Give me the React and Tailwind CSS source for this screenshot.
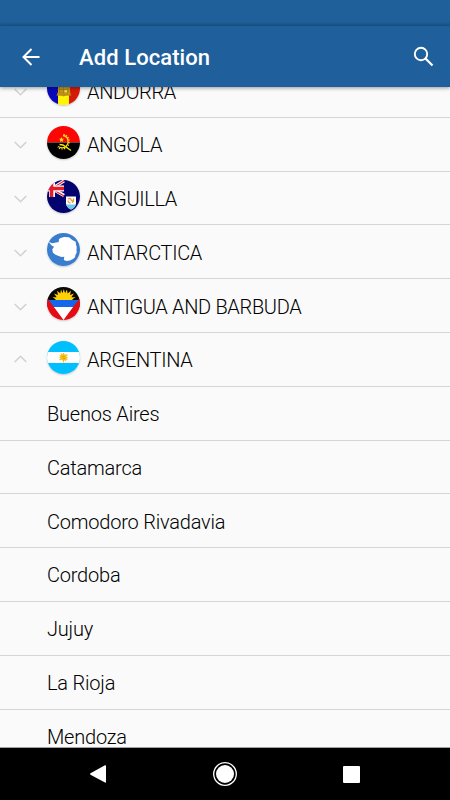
import { clsx } from 'clsx'

function AndorraFlag() {
  return (
    <>
      <path fill="#0b08b8" d="M0 0h11v33H0z" />
      <path fill="#fff500" d="M11 0h11v33H11z" />
      <path fill="#d51b08" d="M22 0h11v33H22z" />
      <path fill="#c79a1b" d="M11 10h12v10l1 3.500h-5l-2.500 1-2.500-1H9.500L11 20z" />
      <path fill="none" stroke="#9a741a" strokeWidth="0.600" d="M12.500 12h8.500v9h-8.500zM16.500 12v9M12.500 17.500h8.500M10 23h13.500" />
      <path fill="#f1d34a" d="M17.500 18h2.500v2.500h-2.500z" />
    </>
  )
}

function AngolaFlag() {
  return (
    <>
      <path fill="#fb0505" d="M0 0h33v16.500H0z" />
      <path fill="#000" d="M0 16.500h33V33H0z" />
      <path
        fill="none"
        stroke="#f7df13"
        strokeWidth="1.300"
        d="M16 9.500C21.500 10.500 22.500 16 19.500 19.800C17.500 22.300 14 22.200 11 20.500"
      />
      <path
        fill="none"
        stroke="#f7df13"
        strokeWidth="1.200"
        strokeDasharray="1.300 1.300"
        d="M16.500 8.300C22.500 9.500 23.500 16.500 20.500 20.700C18 23.500 14 23.700 10.500 21.500"
      />
      <path fill="none" stroke="#f7df13" strokeWidth="1.400" d="M12.500 18.500l3.500.500 8 5.500" />
      <path fill="#f7df13" d="M14.500 11l.7 1.700 1.900.1-1.400 1.300.5 1.900-1.700-1-1.600 1 .4-1.900-1.400-1.300 1.900-.1z" />
    </>
  )
}

function AnguillaFlag() {
  return (
    <>
      <path fill="#04046f" d="M0 0h33v33H0z" />
      <path stroke="#fff" strokeWidth="3.200" d="M5 8.500L17 1M5 8.500l12 7" />
      <path stroke="#e51b2b" strokeWidth="1.100" d="M5 8.500L17 1M5 9l12 7" />
      <path stroke="#fff" strokeWidth="6" d="M5 0v17M0 8.500h17" />
      <path stroke="#e51b2b" strokeWidth="3.600" d="M4.500 0v17M0 8.500h17" />
      <path fill="#fff" d="M19 16.500h10v7q-.6 4-5 6Q19.600 27.500 19 23.500z" />
      <path fill="#69cbe5" d="M19.200 24.500h9.600q-1 3.500-4.800 5q-3.800-1.500-4.800-5z" />
      <path fill="none" stroke="#f29a32" strokeWidth="1.200" d="M21 19q2.500-1.500 3 .5t2 1M21 20.500q0 2.500 2.500 2.300M25 22.500q2-1 1.500-4" />
    </>
  )
}

function AntarcticaFlag() {
  return (
    <>
      <path fill="#3a7dce" d="M0 0h33v33H0z" />
      <path
        fill="#fff"
        d="M1.700 8.700L5 10.300l3-.6 3.700-.7.2-2.500L13 5.300 17 4l5 .3L25.300 7l3.400 1.700.3 3 .7 2-.2 3 .2 3-1.200 2-.5 2.600-2 1.700-3 1.500-3.500.5-2.700-1 .5-3.300-2.700.2-3-.9-3-1.300-2.700-2-.6-3.400L7 13.700l-2.700-1.400z"
      />
    </>
  )
}

function AntiguaFlag() {
  return (
    <>
      <path fill="#080808" d="M0 0h33v13H0z" />
      <path
        fill="#ffd008"
        d="M6 13.500l3-1-3.500-2.300 4.200 0-2.700-3.700 4 1.500-1-4.300 3.300 2.900L14 2.600l1.500 3.700L16.800 2l1.300 4.300 1.800-3.700.7 4 3.400-2.900-1 4.300 4-1.500-2.700 3.700 4.200 0L25 12.500l3 1z"
      />
      <path fill="#1268ec" d="M0 13h33v7H0z" />
      <path fill="#fff" d="M0 20h33v13H0z" />
      <path fill="#e20c12" d="M0 12h1L16.500 33H0zM33 12h-1L16.500 33H33z" />
    </>
  )
}

function ArgentinaFlag() {
  return (
    <>
      <path fill="#00bfff" d="M0 0h33v33H0z" />
      <path fill="#fff" d="M0 11h33v11H0z" />
      <circle cx="16.500" cy="16.200" r="3.200" fill="#f8c51b" />
      <path
        stroke="#f4bd15"
        strokeWidth="1.100"
        d="M16.500 12v9.500M12.500 14.500l8 4M20.500 13.500l-8 5.500M12.500 16.500h8M14 12.500l5 7.500"
      />
      <path stroke="#b98716" strokeWidth="0.500" d="M15.500 15.500h2M16 17.500h2" />
    </>
  )
}

const countries = [
  { name: 'ANDORRA', Flag: AndorraFlag },
  { name: 'ANGOLA', Flag: AngolaFlag },
  { name: 'ANGUILLA', Flag: AnguillaFlag },
  { name: 'ANTARCTICA', Flag: AntarcticaFlag },
  { name: 'ANTIGUA AND BARBUDA', Flag: AntiguaFlag },
  {
    name: 'ARGENTINA',
    Flag: ArgentinaFlag,
    cities: ['Buenos Aires', 'Catamarca', 'Comodoro Rivadavia', 'Cordoba', 'Jujuy', 'La Rioja', 'Mendoza'],
  },
]

function CountryRow({ name, Flag, expanded }) {
  return (
    <div className="flex h-[53.8px] items-start border-b border-[#d5d5d5] pl-[14px]">
      <svg
        className={clsx('h-2 w-[13px] shrink-0', expanded ? 'mt-[22px]' : 'mt-[23.500px]')}
        viewBox="0 0 13 8"
        fill="none"
        stroke="#d2d2d2"
        strokeWidth="1.600"
      >
        <path d={expanded ? 'M.7 7L6.500 1.300 12.300 7' : 'M.7 1L6.500 6.700 12.300 1'} />
      </svg>
      <svg
        className="mt-[8px] ml-[20px] size-[33px] shrink-0 rounded-full shadow-[0_1px_2px_rgba(0,0,0,0.2)]"
        viewBox="0 0 33 33"
        fill="none"
      >
        <Flag />
      </svg>
      <span className="mt-[15.500px] ml-[7px] whitespace-nowrap text-[20px] leading-6 font-light tracking-[-0.33px]">
        {name}
      </span>
    </div>
  )
}

function CityRow({ name }) {
  return (
    <div className="flex h-[53.8px] items-start border-b border-[#d5d5d5] pl-[47px]">
      <span className="mt-[15.300px] text-[20px] leading-6 font-light tracking-[-0.21px]">{name}</span>
    </div>
  )
}

export default function App() {
  return (
    <div className="flex h-[800px] w-[450px] flex-col overflow-hidden bg-[#fafafa] font-['Roboto',sans-serif] text-black">
      <div className="h-[26px] shrink-0 bg-linear-to-b from-[#1f609b] from-85% to-[#1b5387]" />
      <header className="relative z-10 flex h-[61px] shrink-0 items-center bg-[#1f5f9b] pr-[16px] pl-[22px] text-white shadow-[0_1px_4px_rgba(0,0,0,0.4)]">
        <svg className="size-[18px]" viewBox="0 0 18 18" fill="none" stroke="currentColor" strokeWidth="2">
          <path d="M17.500 9H1.500M9.500 1L1.500 9l8 8" />
        </svg>
        <h1 className="mt-[2px] ml-[39px] text-[22px] leading-7 font-medium tracking-[0.08px]">Add Location</h1>
        <svg className="ml-auto size-[21px]" viewBox="0 0 21 21" fill="none" stroke="currentColor">
          <circle cx="8" cy="8" r="6.200" strokeWidth="1.900" />
          <path d="M12.500 12.500l7 7" strokeWidth="2.300" />
        </svg>
      </header>

      <main className="min-h-0 flex-1 overflow-hidden">
        <div className="-mt-[23px]">
          {countries.map(({ name, Flag, cities }) => (
            <div key={name}>
              <CountryRow name={name} Flag={Flag} expanded={Boolean(cities)} />
              {cities?.map((city) => (
                <CityRow key={city} name={city} />
              ))}
            </div>
          ))}
        </div>
      </main>

      <nav className="flex h-[53px] shrink-0 items-center border-t border-[#9ea3a0] bg-black pl-[90px] text-white">
        <svg className="size-[18px]" viewBox="0 0 18 18" fill="currentColor">
          <path d="M.5 8.300L15 .3q1-.4 1 .7v16q0 1-1 .6L.5 9.700q-.8-.7 0-1.400z" />
        </svg>
        <svg className="ml-[105px] size-[24px]" viewBox="0 0 24 24" fill="currentColor">
          <circle cx="12" cy="12" r="11.300" fill="none" stroke="currentColor" strokeWidth="1.300" />
          <circle cx="12" cy="12" r="9" />
        </svg>
        <div className="ml-[106px] h-[17px] w-[17px] rounded-[1px] bg-white" />
      </nav>
    </div>
  )
}
